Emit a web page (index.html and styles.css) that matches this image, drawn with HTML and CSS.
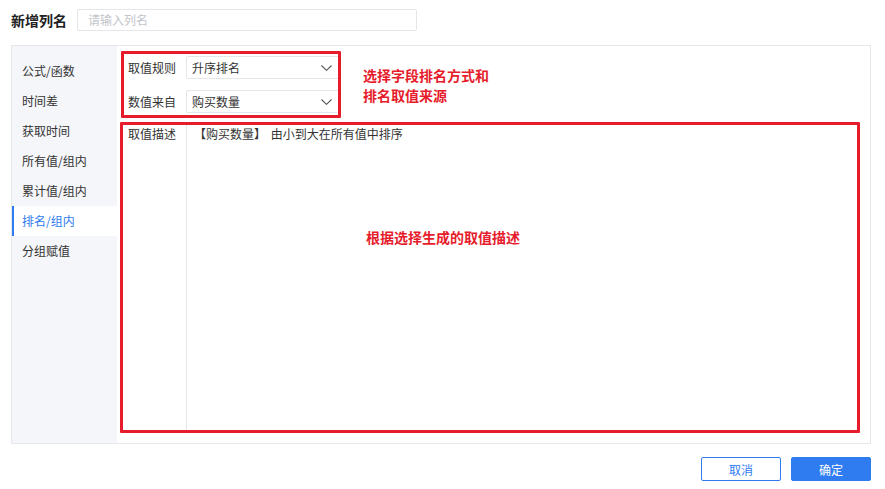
FILE: index.html
```html
<!DOCTYPE html>
<html lang="zh-CN">
<head>
    <meta charset="UTF-8">
    <title>新增列名</title>
    <link rel="stylesheet" href="styles.css">
</head>
<body>
    <div class="header">
        <span class="title">新增列名</span>
        <div class="name-input">请输入列名</div>
    </div>
    <div class="panel">
        <div class="sidebar">
            <div class="menu-item">公式/函数</div>
            <div class="menu-item">时间差</div>
            <div class="menu-item">获取时间</div>
            <div class="menu-item">所有值/组内</div>
            <div class="menu-item">累计值/组内</div>
            <div class="menu-item active">排名/组内</div>
            <div class="menu-item">分组赋值</div>
        </div>
        <div class="content">
            <div class="form-row">
                <span class="label">取值规则</span>
                <div class="select">
                    <span>升序排名</span>
                    <svg class="chevron" width="11" height="6" viewBox="0 0 11 6"><path d="M0.5 0.5 L5.5 5.3 L10.5 0.5" fill="none" stroke="#555" stroke-width="1.1"/></svg>
                </div>
            </div>
            <div class="form-row">
                <span class="label">数值来自</span>
                <div class="select">
                    <span>购买数量</span>
                    <svg class="chevron" width="11" height="6" viewBox="0 0 11 6"><path d="M0.5 0.5 L5.5 5.3 L10.5 0.5" fill="none" stroke="#555" stroke-width="1.1"/></svg>
                </div>
            </div>
            <div class="desc-row">
                <span class="label">取值描述</span>
                <div class="desc-box">【购买数量】 由小到大在所有值中排序</div>
            </div>
        </div>

        <!-- annotations drawn over the screenshot -->
        <div class="mark mark-rule"></div>
        <div class="mark mark-desc"></div>
        <div class="note note-rule">选择字段排名方式和<br>排名取值来源</div>
        <div class="note note-desc">根据选择生成的取值描述</div>
    </div>
    <div class="footer">
        <button class="btn btn-cancel">取消</button>
        <button class="btn btn-ok">确定</button>
    </div>
</body>
</html>
```

FILE: styles.css
```css
body {
    margin: 0;
    width: 885px;
    height: 489px;
    background: #fff;
    font-family: "Noto Sans CJK SC", "Noto Sans", sans-serif;
    font-size: 12px;
    color: #333;
}

.header {
    display: flex;
    align-items: center;
    padding: 9px 11px 0;
    height: 22px;
}
.title {
    font-size: 14px;
    font-weight: bold;
    color: #222;
}
.name-input {
    margin-left: 10px;
    width: 328px;
    height: 20px;
    line-height: 20px;
    padding-left: 10px;
    border: 1px solid #e4e6ea;
    border-radius: 2px;
    color: #c2c5ca;
}

.panel {
    position: relative;
    display: flex;
    margin: 14px 0 0 11px;
    width: 858px;
    height: 397px;
    border: 1px solid #e6e7ea;
}
.sidebar {
    width: 105px;
    padding-top: 10px;
    background: #f5f6f9;
}
.menu-item {
    height: 30px;
    line-height: 30px;
    padding-left: 10px;
    color: #333;
}
.menu-item.active {
    background: #fff;
    padding-left: 8px;
    border-left: 2px solid #2f7bf0;
    color: #2f7bf0;
}

.content {
    flex: 1;
    display: flex;
    flex-direction: column;
    padding-top: 10px;
}
.form-row {
    display: flex;
    align-items: center;
    padding-left: 11px;
    margin-bottom: 11px;
}
.label {
    width: 58px;
    color: #333;
}
.select {
    display: flex;
    align-items: center;
    justify-content: space-between;
    width: 142px;
    height: 21px;
    padding: 0 5px 0 5px;
    border: 1px solid #e4e6ea;
    border-radius: 2px;
}
.chevron {
    margin-right: 2px;
}
.desc-row {
    display: flex;
    height: 311px;
    margin-top: -2px;
    padding-left: 11px;
}
.desc-row .label {
    padding-top: 3px;
}
.desc-box {
    flex: 1;
    margin-right: 11px;
    padding: 3px 0 0 7px;
    border-left: 1px solid #e4e6ea;
    word-spacing: 2px;
}

.mark {
    position: absolute;
    border: 3px solid #e61c2c;
    border-radius: 1px;
}
.mark-rule {
    left: 109px;
    top: 5px;
    width: 214px;
    height: 61px;
}
.mark-desc {
    left: 108px;
    top: 76px;
    width: 734px;
    height: 305px;
}
.note {
    position: absolute;
    color: #e61c2c;
    font-size: 14px;
    font-weight: bold;
    line-height: 20px;
}
.note-rule {
    left: 351px;
    top: 19px;
}
.note-desc {
    left: 354px;
    top: 181px;
}

.footer {
    display: flex;
    justify-content: flex-end;
    gap: 10px;
    width: 871px;
    margin-top: 13px;
}
.btn {
    width: 80px;
    height: 24px;
    border-radius: 2px;
    font-family: inherit;
    font-size: 12px;
    cursor: pointer;
}
.btn-cancel {
    background: #fff;
    border: 1px solid #2f7bf0;
    color: #2f7bf0;
}
.btn-ok {
    background: #2f7bf0;
    border: 1px solid #2f7bf0;
    color: #fff;
}
```
